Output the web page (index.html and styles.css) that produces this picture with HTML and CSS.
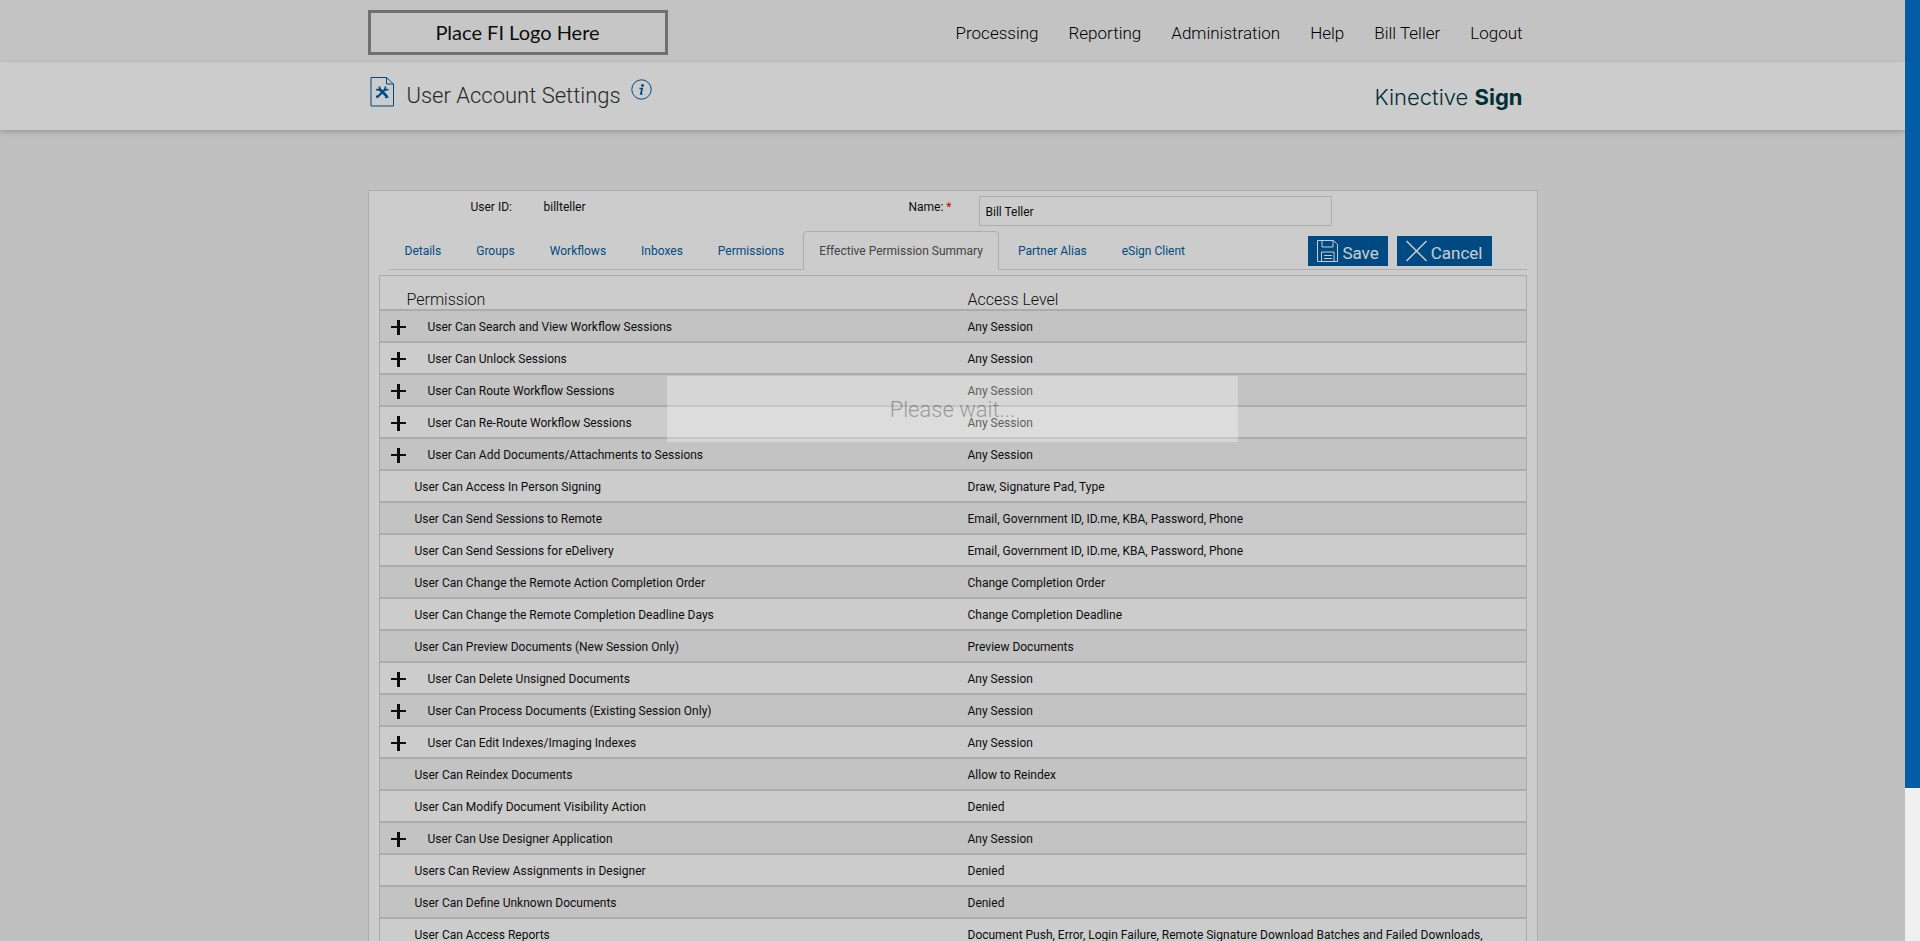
FILE: index.html
```html
<!DOCTYPE html>
<html lang="en">
<head>
  <meta charset="UTF-8" />
  <title>User Account Settings</title>
  <meta name="viewport" content="width=device-width, initial-scale=1.0" />
  <link rel="stylesheet" href="styles.css">
</head>
<body>

  <div class="page">
    <header class="topbar">
      <div class="container topbar-inner">
        <div class="fi-logo">Place FI Logo Here</div>
        <nav class="main-nav">
          <a href="#">Processing</a>
          <a href="#">Reporting</a>
          <a href="#">Administration</a>
          <a href="#">Help</a>
          <a href="#">Bill Teller</a>
          <a href="#">Logout</a>
        </nav>
      </div>
    </header>

    <div class="titlebar">
      <div class="container titlebar-inner">
        <svg class="doc-icon" width="25" height="30" viewBox="0 0 25 30" fill="none" stroke="#005da6">
          <path d="M1 .5h15.500l7 6.500v22H1z" />
          <path d="M16.500 .5v6.500h7" />
          <path d="M9 11.500l8 8" stroke-width="2.600" />
          <path d="M7 20.500l9-9" stroke-width="2.200" />
          <path d="M6 12.500l3.500 .5v-3.500M15.500 9.500l-.5 3.500 3.500-.5M15 20.500l3.500-.5M6.500 18.500l1 2.500" stroke-width="1.700" />
        </svg>
        <h1>User Account Settings</h1>
        <svg class="info-icon" width="21" height="21" viewBox="0 0 21 21">
          <circle cx="10.500" cy="10.500" r="9.700" fill="none" stroke="#005da6" />
          <circle cx="11.500" cy="6.500" r="1.400" fill="#005da6" />
          <path d="M8.500 9.500h2.700l-1.400 5.500h1.700" fill="none" stroke="#005da6" stroke-width="1.700" />
        </svg>
        <div class="brand">Kinective <b>Sign</b></div>
      </div>
    </div>

    <main class="container panel">
      <form class="user-row">
        <span class="user-label">User ID:</span>
        <span class="user-id">billteller</span>
        <label class="name-label" for="name">Name: <span class="required">*</span></label>
        <input class="name-input" id="name" type="text" value="Bill Teller" />
      </form>

      <div class="tabs">
        <a href="#">Details</a>
        <a href="#">Groups</a>
        <a href="#">Workflows</a>
        <a href="#">Inboxes</a>
        <a href="#">Permissions</a>
        <a href="#" class="active">Effective Permission Summary</a>
        <a href="#">Partner Alias</a>
        <a href="#">eSign Client</a>
        <div class="actions">
          <button type="button" class="btn">
            <svg width="21" height="22" viewBox="0 0 21 22" fill="none" stroke="#fff">
              <path d="M.5 .5h16l4 4v17H.5z" />
              <path d="M5 .5v6.500h11V.5M4.500 21.500v-9.500h12.500v9.500M7 15.500h8M7 18.500h8" />
            </svg>
            Save
          </button>
          <button type="button" class="btn">
            <svg width="21" height="22" viewBox="0 0 21 22" fill="none" stroke="#fff" stroke-width="1.500">
              <path d="M.5 1l20 20M20.500 1l-20 20" />
            </svg>
            Cancel
          </button>
        </div>
      </div>

      <table class="permissions">
        <thead>
          <tr><th>Permission</th><th>Access Level</th></tr>
        </thead>
        <tbody>
          <tr><td><button class="expand" aria-label="Expand"></button>User Can Search and View Workflow Sessions</td><td>Any Session</td></tr>
          <tr><td><button class="expand" aria-label="Expand"></button>User Can Unlock Sessions</td><td>Any Session</td></tr>
          <tr><td><button class="expand" aria-label="Expand"></button>User Can Route Workflow Sessions</td><td>Any Session</td></tr>
          <tr><td><button class="expand" aria-label="Expand"></button>User Can Re-Route Workflow Sessions</td><td>Any Session</td></tr>
          <tr><td><button class="expand" aria-label="Expand"></button>User Can Add Documents/Attachments to Sessions</td><td>Any Session</td></tr>
          <tr><td class="plain">User Can Access In Person Signing</td><td>Draw, Signature Pad, Type</td></tr>
          <tr><td class="plain">User Can Send Sessions to Remote</td><td>Email, Government ID, ID.me, KBA, Password, Phone</td></tr>
          <tr><td class="plain">User Can Send Sessions for eDelivery</td><td>Email, Government ID, ID.me, KBA, Password, Phone</td></tr>
          <tr><td class="plain">User Can Change the Remote Action Completion Order</td><td>Change Completion Order</td></tr>
          <tr><td class="plain">User Can Change the Remote Completion Deadline Days</td><td>Change Completion Deadline</td></tr>
          <tr><td class="plain">User Can Preview Documents (New Session Only)</td><td>Preview Documents</td></tr>
          <tr><td><button class="expand" aria-label="Expand"></button>User Can Delete Unsigned Documents</td><td>Any Session</td></tr>
          <tr><td><button class="expand" aria-label="Expand"></button>User Can Process Documents (Existing Session Only)</td><td>Any Session</td></tr>
          <tr><td><button class="expand" aria-label="Expand"></button>User Can Edit Indexes/Imaging Indexes</td><td>Any Session</td></tr>
          <tr><td class="plain">User Can Reindex Documents</td><td>Allow to Reindex</td></tr>
          <tr><td class="plain">User Can Modify Document Visibility Action</td><td>Denied</td></tr>
          <tr><td><button class="expand" aria-label="Expand"></button>User Can Use Designer Application</td><td>Any Session</td></tr>
          <tr><td class="plain">Users Can Review Assignments in Designer</td><td>Denied</td></tr>
          <tr><td class="plain">User Can Define Unknown Documents</td><td>Denied</td></tr>
          <tr><td class="plain">User Can Access Reports</td><td>Document Push, Error, Login Failure, Remote Signature Download Batches and Failed Downloads,</td></tr>
        </tbody>
      </table>
    </main>

    <!-- loading overlay -->
    <div class="overlay"></div>
    <div class="wait-box">Please wait...</div>
  </div>

  <div class="scrollbar"><div class="thumb"></div></div>

</body>
</html>
```
FILE: styles.css
```css
* {
  box-sizing: border-box;
}
body {
  margin: 0;
  height: 100vh;
  display: flex;
  overflow: hidden;
  background: #f0f0f0;
  color: #111;
  font-family: Roboto, sans-serif;
  font-size: 12px;
  line-height: 17px;
}
a {
  color: #005da6;
  text-decoration: none;
}

.page {
  position: relative;
  flex: 1;
  height: 100vh;
  overflow: hidden;
}
.container {
  width: 100%;
  max-width: 1170px;
  margin: 0 auto;
}

/* Top navigation */
.topbar {
  background: #f4f4f4;
}
.topbar-inner {
  display: flex;
  justify-content: space-between;
  align-items: center;
  height: 62px;
  padding-right: 15px;
}
.fi-logo {
  width: 300px;
  border: 3px solid #8c8c8c;
  background: #f8f8f8;
  font-family: Lato, sans-serif;
  font-size: 20px;
  line-height: 39px;
  text-align: center;
  margin-top: 3px;
}
.main-nav {
  display: flex;
  gap: 30px;
  margin-top: 4px;
  font-size: 17px;
  font-weight: 300;
}
.main-nav a {
  color: #000;
}

/* Page title */
.titlebar {
  background: #fff;
  box-shadow: 0 2px 5px rgba(0,0,0,0.2);
}
.titlebar-inner {
  display: flex;
  height: 68px;
  padding: 15px 15px 0 2px;
}
.titlebar h1 {
  margin: 0 10px 0 12px;
  font-size: 22px;
  font-weight: 300;
  line-height: 38px;
  color: #333;
}
.info-icon {
  margin-top: 2px;
}
.brand {
  margin-left: auto;
  color: #003b44;
  font-family: Inter, sans-serif;
  font-size: 22px;
  font-weight: 300;
  line-height: 40px;
}
.brand b {
  font-weight: 700;
}

/* Content panel */
.panel {
  margin-top: 60px;
  padding: 5px 10px;
  border: 1px solid #d9d9d9;
  background: #fff;
}
.user-row {
  display: flex;
  height: 30px;
}
.user-label {
  width: 73px;
  margin-left: 92px;
}
.user-label, .user-id, .name-label {
  padding-top: 3px;
}
.user-id {
  width: 365px;
}
.name-label {
  width: 70px;
}
.required {
  color: #f00000;
}
.name-input {
  width: 353px;
  padding: 2px 6px 0;
  border: 1px solid #d9d9d9;
  background: #fff;
  color: #111;
  font: inherit;
}

.tabs {
  display: flex;
  align-items: flex-end;
  gap: 3px;
  margin: 5px 0 5px 10px;
  border-bottom: 1px solid #d9d9d9;
}
.tabs a {
  margin-bottom: -1px;
  padding: 11px 15px 9px;
  border: 1px solid transparent;
  border-radius: 4px 4px 0 0;
}
.tabs a.active {
  border-color: #d9d9d9;
  border-bottom-color: #fff;
  background: #fff;
  color: #555;
}
.actions {
  display: flex;
  gap: 9px;
  margin: 0 35px 3px auto;
}
.btn {
  display: flex;
  gap: 4px;
  height: 30px;
  padding: 4px 9px;
  border: none;
  background: #005da6;
  color: #fff;
  font-family: inherit;
  font-size: 17px;
  line-height: 26px;
}

/* Permission list */
.permissions {
  width: 100%;
  border: 1px solid #d6d6d6;
  border-spacing: 0;
  table-layout: fixed;
}
.permissions th {
  height: 35px;
  padding: 15px 0 0 27px;
  border-bottom: 2px solid #d6d6d6;
  font-size: 16px;
  font-weight: 300;
  line-height: 18px;
  text-align: left;
}
.permissions th:first-child {
  width: 588px;
}
.permissions th + th {
  padding-left: 0;
}
.permissions td {
  height: 32px;
  padding: 2px 0 0;
  border-bottom: 2px solid #d6d6d6;
}
.permissions td.plain {
  padding-left: 35px;
}
.permissions tbody tr:nth-child(odd) {
  background: #f4f4f4;
}
.permissions tbody tr:last-child td {
  height: 60px;
  padding-top: 8px;
  vertical-align: top;
}
.expand {
  width: 15px;
  height: 15px;
  margin: 0 22px 0 11px;
  padding: 0;
  border: none;
  background:
    linear-gradient(#111, #111) center / 3px 15px no-repeat,
    linear-gradient(#111, #111) center / 15px 2px no-repeat;
  vertical-align: middle;
}

/* Loading overlay */
.overlay {
  position: absolute;
  inset: 0;
  background: rgba(0,0,0,0.2);
}
.wait-box {
  position: absolute;
  top: 40%;
  left: 35%;
  width: 30%;
  height: 66px;
  background: #fff;
  color: #333;
  opacity: 0.32;
  font-size: 22px;
  font-weight: 300;
  line-height: 68px;
  text-align: center;
}

/* Scrollbar */
.scrollbar {
  width: 15px;
  background: #f0f0f0;
}
.thumb {
  height: 83.7%;
  background: #005da6;
}
```
